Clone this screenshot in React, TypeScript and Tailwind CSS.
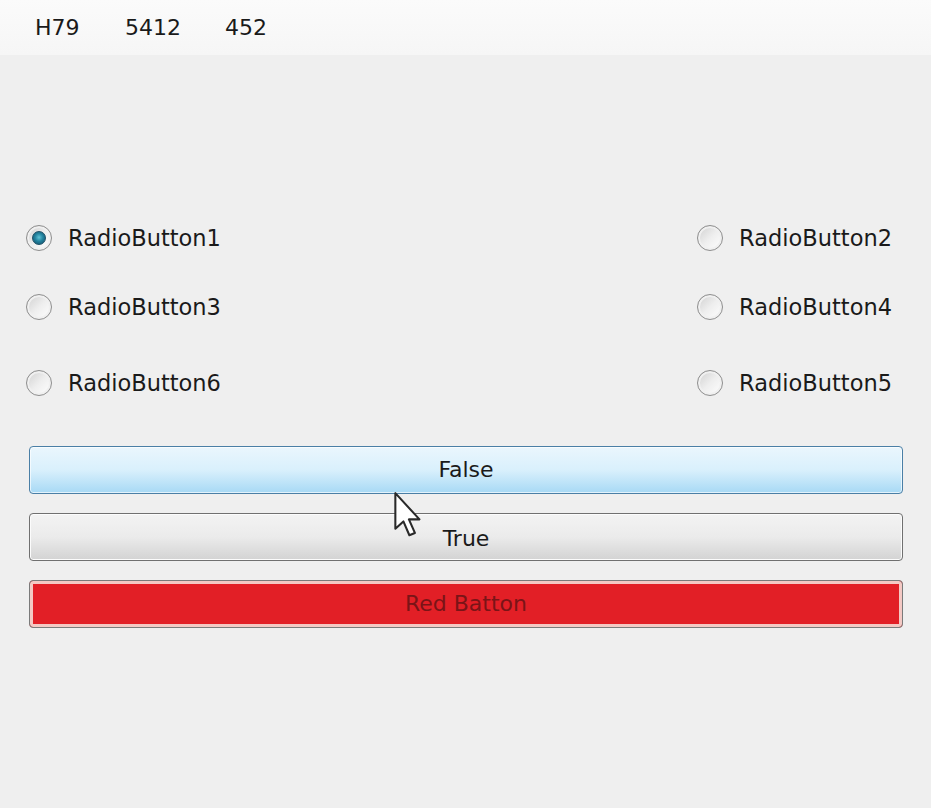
import React from "react";

const font = { fontFamily: '"DejaVu Sans", Verdana, sans-serif' };

function Radio({ label, checked = false }: { label: string; checked?: boolean }) {
  return (
    <div className="flex h-[30px] items-center">
      <span className="flex h-[26px] w-[26px] items-center justify-center rounded-full border border-[#8e8e8e] bg-gradient-to-br from-[#cfcfcf] via-[#eeeeee] to-[#ffffff] shadow-[inset_0_0_0_2px_#f0f0f0]">
        {checked && (
          <span className="h-[14px] w-[14px] rounded-full border border-[#1d4f66] bg-[radial-gradient(circle_at_50%_45%,#5fc3d6_0%,#22829e_45%,#124d66_100%)]" />
        )}
      </span>
      <span className="ml-[16px] text-[22.5px] leading-none text-[#1a1a1a]">{label}</span>
    </div>
  );
}

function Cursor() {
  return (
    <svg
      className="absolute left-[394px] top-[492px]"
      width="28"
      height="46"
      viewBox="0 0 12 20"
    >
      <path
        d="M0.5 0.5 L0.5 16 L4 12.8 L6.6 18.8 L9 17.8 L6.4 11.9 L11 11.9 Z"
        fill="#ffffff"
        stroke="#2a2a2a"
        strokeWidth="0.9"
        strokeLinejoin="round"
      />
    </svg>
  );
}

export default function App() {
  return (
    <div className="relative h-[808px] w-[931px] overflow-hidden bg-[#efefef]" style={font}>
      {/* header */}
      <div className="flex h-[55px] items-center bg-gradient-to-b from-[#fbfbfb] to-[#f6f6f6] pl-[35px] text-[22px] text-[#1a1a1a]">
        <span className="w-[90px]">H79</span>
        <span className="w-[100px]">5412</span>
        <span>452</span>
      </div>

      {/* radios */}
      <div className="mt-[168px] flex justify-between pl-[26px] pr-[39px]">
        <div className="flex flex-col">
          <Radio label="RadioButton1" checked />
          <div className="mt-[39px]">
            <Radio label="RadioButton3" />
          </div>
          <div className="mt-[46px]">
            <Radio label="RadioButton6" />
          </div>
        </div>
        <div className="flex flex-col">
          <Radio label="RadioButton2" />
          <div className="mt-[39px]">
            <Radio label="RadioButton4" />
          </div>
          <div className="mt-[46px]">
            <Radio label="RadioButton5" />
          </div>
        </div>
      </div>

      {/* buttons */}
      <div className="ml-[29px] mt-[48px] flex w-[874px] flex-col gap-[19px] text-[22px] leading-none">
        <button className="flex h-[48px] items-center justify-center rounded-[4px] border border-[#4a7fa6] bg-gradient-to-b from-[#eaf6fd] via-[#d9f0fc] to-[#a7d9f5] text-[#1a1a1a] shadow-[inset_0_0_0_1px_#ffffffaa]">
          False
        </button>
        <button className="flex h-[48px] items-center justify-center rounded-[4px] border border-[#707070] bg-gradient-to-b from-[#f3f3f3] via-[#ebebeb] to-[#d3d3d3] pt-[4px] text-[#1a1a1a] shadow-[inset_0_0_0_1px_#fcfcfc]">
          True
        </button>
        <button className="flex h-[48px] items-center justify-center rounded-[4px] border border-[#7a7a7a] bg-[#e21f26] text-[#7a1417] shadow-[inset_0_0_0_3px_#f4c9c4]">
          Red Batton
        </button>
      </div>

      <Cursor />
    </div>
  );
}
